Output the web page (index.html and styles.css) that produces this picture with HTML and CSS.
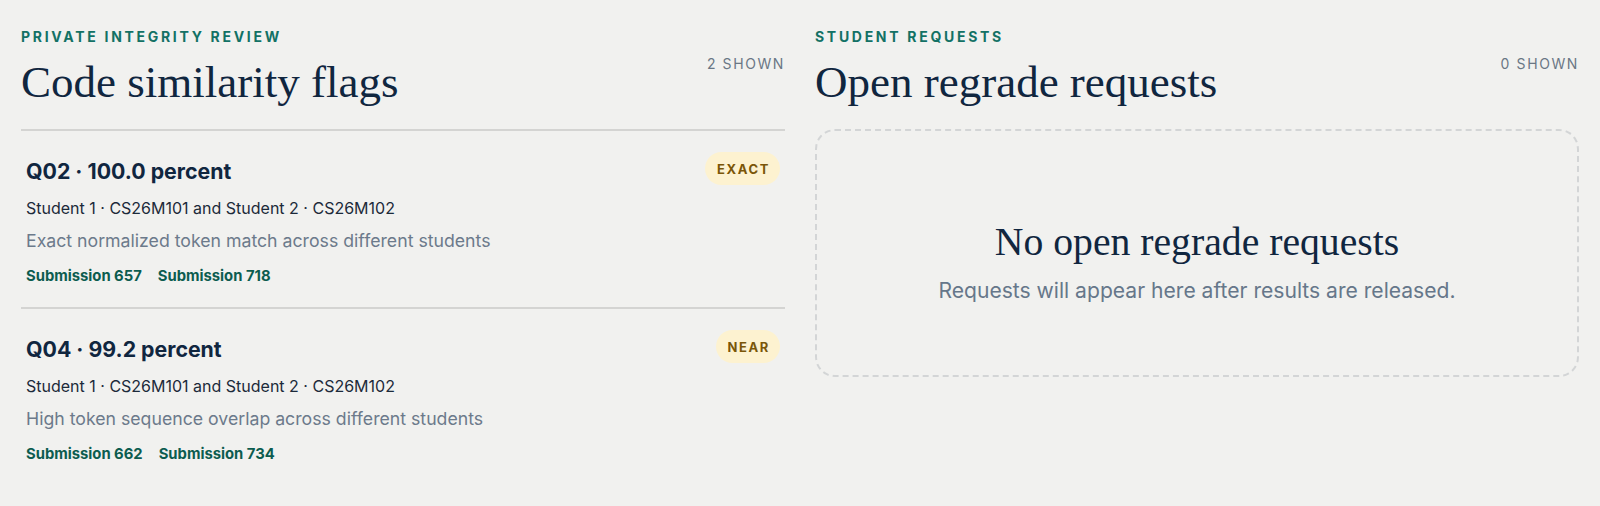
FILE: index.html
```html
<!DOCTYPE html>
<html lang="en">
<head>
    <meta charset="UTF-8">
    <meta name="viewport" content="width=device-width, initial-scale=1.0">
    <title>Integrity and Regrades</title>
    <link rel="stylesheet" href="styles.css">
</head>
<body>
    <div class="review-grid">
        <!-- Similarity flags -->
        <section class="panel">
            <div class="panel-header">
                <div>
                    <p class="eyebrow">Private integrity review</p>
                    <h1>Code similarity flags</h1>
                </div>
                <span class="count">2 shown</span>
            </div>

            <div class="flag-list">
                <div class="flag-item">
                    <div class="flag-top">
                        <h3>Q02 · 100.0 percent</h3>
                        <span class="badge">Exact</span>
                    </div>
                    <p class="students">Student 1 · CS26M101 and Student 2 · CS26M102</p>
                    <p class="reason">Exact normalized token match across different students</p>
                    <div class="links">
                        <a href="#">Submission 657</a>
                        <a href="#">Submission 718</a>
                    </div>
                </div>

                <div class="flag-item">
                    <div class="flag-top">
                        <h3>Q04 · 99.2 percent</h3>
                        <span class="badge">Near</span>
                    </div>
                    <p class="students">Student 1 · CS26M101 and Student 2 · CS26M102</p>
                    <p class="reason">High token sequence overlap across different students</p>
                    <div class="links">
                        <a href="#">Submission 662</a>
                        <a href="#">Submission 734</a>
                    </div>
                </div>
            </div>
        </section>

        <!-- Regrade requests -->
        <section class="panel">
            <div class="panel-header">
                <div>
                    <p class="eyebrow">Student requests</p>
                    <h1>Open regrade requests</h1>
                </div>
                <span class="count">0 shown</span>
            </div>

            <div class="empty-box">
                <h2>No open regrade requests</h2>
                <p>Requests will appear here after results are released.</p>
            </div>
        </section>
    </div>
</body>
</html>
```

FILE: styles.css
```css
* {
    margin: 0;
    padding: 0;
    box-sizing: border-box;
}

body {
    font-family: Inter, "Liberation Sans", Arial, sans-serif;
    color: #10263f;
    background-color: #f1f1ef;
    padding: 28px 21px 0 21px;
}

.review-grid {
    display: grid;
    grid-template-columns: 1fr 1fr;
    gap: 30px;
}

.panel-header {
    display: flex;
    justify-content: space-between;
    align-items: flex-start;
    padding-bottom: 19px;
}

.eyebrow {
    font-size: 14px;
    font-weight: 700;
    letter-spacing: 2.7px;
    text-transform: uppercase;
    color: #137165;
    line-height: 18px;
}

.panel-header h1 {
    font-family: "Liberation Serif", "Times New Roman", serif;
    font-weight: 400;
    font-size: 45px;
    line-height: 56px;
    color: #10263f;
    margin-top: 8px;
}

.count {
    font-size: 14px;
    letter-spacing: 1.6px;
    text-transform: uppercase;
    color: #6a7785;
    margin-top: 27px;
}

/* Flag list */
.flag-item {
    border-top: 2px solid #d4d4d2;
    padding: 23px 5px 21px 5px;
}

.flag-top {
    display: flex;
    justify-content: space-between;
    align-items: flex-start;
}

.flag-top h3 {
    font-size: 21.3px;
    font-weight: 700;
    color: #10263f;
    line-height: 32px;
    margin-top: 1px;
}

.badge {
    background-color: #fdf2d0;
    color: #7a5608;
    font-size: 13px;
    font-weight: 700;
    letter-spacing: 1.6px;
    text-transform: uppercase;
    padding: 8px 10px 7px 12px;
    border-radius: 17px;
    line-height: 18px;
    margin-top: -2px;
}

.students {
    font-size: 16px;
    color: #1c2a3a;
    margin-top: 9px;
    line-height: 24px;
}

.reason {
    font-size: 17.7px;
    color: #6c7a8b;
    margin-top: 9px;
    line-height: 24px;
}

.links {
    display: flex;
    gap: 16px;
    margin-top: 13px;
}

.links a {
    font-size: 14.8px;
    font-weight: 700;
    color: #0c5c4f;
    text-decoration: none;
    line-height: 20px;
}

/* Empty state */
.empty-box {
    border: 2px dashed #d3d5d6;
    border-radius: 20px;
    height: 248px;
    display: flex;
    flex-direction: column;
    align-items: center;
    justify-content: center;
    text-align: center;
}

.empty-box h2 {
    font-family: "Liberation Serif", "Times New Roman", serif;
    font-weight: 400;
    font-size: 39.7px;
    color: #10263f;
    line-height: 48px;
    margin-top: 17px;
}

.empty-box p {
    font-size: 21.1px;
    color: #66778a;
    margin-top: 11px;
    line-height: 28px;
}
```
